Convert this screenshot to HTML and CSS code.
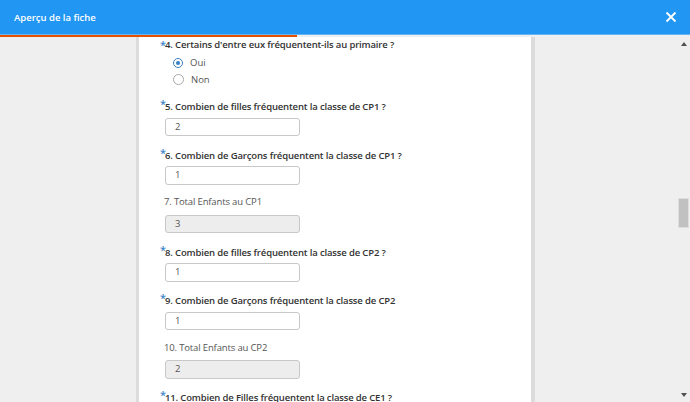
FILE: index.html
```html
<!DOCTYPE html>
<html lang="fr">
<head>
    <meta charset="UTF-8">
    <title>Aperçu de la fiche</title>
    <link rel="stylesheet" href="styles.css">
</head>
<body>

    <div class="modal">
        <header class="modal-head">
            <span class="modal-title">Aperçu de la fiche</span>
            <svg class="close" width="12" height="12" viewBox="0 0 12 12">
                <path d="M1.5 1.5 L10.5 10.5 M10.5 1.5 L1.5 10.5" stroke="#fff" stroke-width="1.8"/>
            </svg>
        </header>
        <div class="head-edge"></div>
        <div class="progress"><div class="progress-bar" style="width: 297px"></div></div>

        <div class="modal-body">
            <div class="side"></div>
            <main class="sheet">
                <div class="question">
                    <label class="q-label"><span class="req req-inline">*</span>4. Certains d'entre eux fréquentent-ils au primaire ?</label>
                    <div class="choices">
                        <div class="choice"><span class="radio checked"></span>Oui</div>
                        <div class="choice"><span class="radio"></span>Non</div>
                    </div>
                </div>

                <div class="question">
                    <label class="q-label"><span class="req">*</span>5. Combien de filles fréquentent la classe de CP1 ?</label>
                    <div class="field">2</div>
                </div>

                <div class="question">
                    <label class="q-label"><span class="req">*</span>6. Combien de Garçons fréquentent la classe de CP1 ?</label>
                    <div class="field">1</div>
                </div>

                <div class="question calc">
                    <label class="q-label">7. Total Enfants au CP1</label>
                    <div class="field readonly">3</div>
                </div>

                <div class="question">
                    <label class="q-label"><span class="req">*</span>8. Combien de filles fréquentent la classe de CP2 ?</label>
                    <div class="field">1</div>
                </div>

                <div class="question">
                    <label class="q-label"><span class="req">*</span>9. Combien de Garçons fréquentent la classe de CP2</label>
                    <div class="field">1</div>
                </div>

                <div class="question calc">
                    <label class="q-label">10. Total Enfants au CP2</label>
                    <div class="field readonly">2</div>
                </div>

                <div class="question">
                    <label class="q-label"><span class="req">*</span>11. Combien de Filles fréquentent la classe de CE1 ?</label>
                    <div class="field">0</div>
                </div>
            </main>
            <div class="side side-right"></div>
            <div class="scrollbar">
                <span class="arrow up"></span>
                <div class="track"><div class="thumb"></div></div>
                <span class="arrow down"></span>
            </div>
        </div>
    </div>

</body>
</html>
```

FILE: styles.css
```css
html, body { margin: 0; height: 100%; overflow: hidden; }
body { font-family: "Open Sans", "Noto Sans", sans-serif; background: #efefef; color: #333; }

.modal { display: flex; flex-direction: column; height: 100%; }
.modal-head { display: flex; align-items: center; justify-content: space-between; height: 34px; padding: 0 13px 0 14px; background: #2196f3; color: #fff; flex: none; }
.modal-title { font-size: 9.5px; font-weight: 600; }
.close { display: block; }
.head-edge { height: 1px; background: #64b5f6; flex: none; }
.progress { height: 2px; background: transparent; flex: none; }
.progress-bar { height: 100%; background: #e65100; }

.modal-body { display: flex; flex: 1; min-height: 0; }
.side { width: 136px; background: #efefef; border-right: 3px solid #dcdcdc; flex: none; }
.side-right { flex: 1; width: auto; border-right: 0; }
.sheet { width: 396px; background: #fff; border-right: 4px solid #dcdcdc; padding: 1px 0 0 21px; box-sizing: border-box; overflow: hidden; flex: none; }

.question { margin-bottom: 10.5px; }
.question:first-child { margin-bottom: 10px; }
.q-label { display: block; height: 14px; line-height: 14px; font-size: 9.5px; font-weight: 600; color: #333; white-space: nowrap; letter-spacing: -0.15px; }
.calc .q-label { font-weight: 400; color: #555; padding-left: 4px; }
.req { display: inline-block; width: 5px; color: #3e86c8; font-size: 11px; vertical-align: 2px; line-height: 1; }
.req-inline { vertical-align: -1px; }

.choices { padding: 2px 0 0 13px; }
.choice { display: flex; align-items: center; gap: 7px; height: 17px; font-size: 9.5px; color: #555; }
.radio { width: 9px; height: 9px; border: 1px solid #aaa; border-radius: 50%; box-sizing: content-box; position: relative; }
.radio.checked { border: 1.5px solid #3a7fc1; width: 8px; height: 8px; }
.radio.checked::after { content: ""; position: absolute; left: 2px; top: 2px; width: 4px; height: 4px; border-radius: 50%; background: #3a7fc1; }

.field { width: 135px; height: 18.5px; margin: 5.5px 0 0 5px; box-sizing: border-box; border: 1px solid #c8c8c8; border-radius: 3px; padding: 0 9px; line-height: 16.5px; font-size: 9.5px; color: #555; background: #fff; }
.field.readonly { background: #ededed; }

.scrollbar { width: 13px; display: flex; flex-direction: column; align-items: center; background: #efefef; flex: none; }
.arrow { width: 0; height: 0; border-left: 3.5px solid transparent; border-right: 3.5px solid transparent; margin: 5px 0; }
.arrow.up { border-bottom: 4px solid #505050; }
.arrow.down { border-top: 4px solid #505050; }
.track { flex: 1; width: 100%; }
.thumb { width: 11px; height: 30px; margin: 147px 0 0 1px; background: #c1c1c1; border: 1px solid #ddd; box-sizing: border-box; }
```
